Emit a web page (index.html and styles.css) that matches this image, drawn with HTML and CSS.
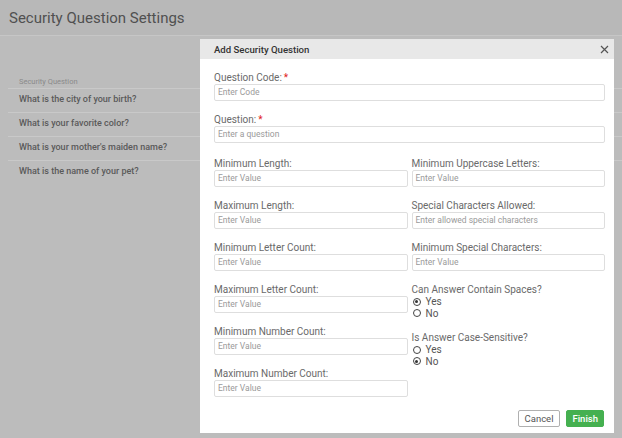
FILE: index.html
```html
<!DOCTYPE html>
<html>
<head>
<meta charset="utf-8">
<link rel="stylesheet" href="styles.css">
</head>
<body>
<div class="page">
  <header class="page-head"><h1 class="page-title">Security Question Settings</h1></header>
  <div class="page-body">
    <div class="q-table">
      <div class="q-th">Security Question</div>
      <div class="q-row">What is the city of your birth?</div>
      <div class="q-row">What is your favorite color?</div>
      <div class="q-row">What is your mother's maiden name?</div>
      <div class="q-row last">What is the name of your pet?</div>
    </div>
  </div>
</div>

<div class="modal">
  <div class="modal-head">
    <span class="modal-title">Add Security Question</span>
    <span class="modal-close">
      <svg width="9" height="9" viewBox="0 0 9 9"><path d="M1 1L8 8M8 1L1 8" stroke="#555" stroke-width="1.2" fill="none"/></svg>
    </span>
  </div>
  <div class="modal-body">
    <div class="field">
      <label class="lbl">Question Code:<span class="req">*</span></label>
      <div class="inp">Enter Code</div>
    </div>
    <div class="field">
      <label class="lbl">Question:<span class="req">*</span></label>
      <div class="inp">Enter a question</div>
    </div>
    <div class="cols">
      <div class="col">
        <div class="field"><label class="lbl">Minimum Length:</label><div class="inp">Enter Value</div></div>
        <div class="field"><label class="lbl">Maximum Length:</label><div class="inp">Enter Value</div></div>
        <div class="field"><label class="lbl">Minimum Letter Count:</label><div class="inp">Enter Value</div></div>
        <div class="field"><label class="lbl">Maximum Letter Count:</label><div class="inp">Enter Value</div></div>
        <div class="field"><label class="lbl">Minimum Number Count:</label><div class="inp">Enter Value</div></div>
        <div class="field"><label class="lbl">Maximum Number Count:</label><div class="inp">Enter Value</div></div>
      </div>
      <div class="col">
        <div class="field"><label class="lbl">Minimum Uppercase Letters:</label><div class="inp">Enter Value</div></div>
        <div class="field"><label class="lbl">Special Characters Allowed:</label><div class="inp">Enter allowed special characters</div></div>
        <div class="field"><label class="lbl">Minimum Special Characters:</label><div class="inp">Enter Value</div></div>
        <div class="field radio-group">
          <label class="lbl">Can Answer Contain Spaces?</label>
          <div class="radio"><span class="dot on"></span>Yes</div>
          <div class="radio"><span class="dot"></span>No</div>
        </div>
        <div class="field radio-group">
          <label class="lbl">Is Answer Case-Sensitive?</label>
          <div class="radio"><span class="dot"></span>Yes</div>
          <div class="radio"><span class="dot on"></span>No</div>
        </div>
      </div>
    </div>
  </div>
  <div class="modal-foot">
    <button class="btn btn-cancel">Cancel</button>
    <button class="btn btn-finish">Finish</button>
  </div>
</div>
</body>
</html>
```
FILE: styles.css
```css
html, body {
  margin: 0;
  padding: 0;
}
body {
  width: 622px;
  height: 438px;
  overflow: hidden;
  background: #bcbcbc;
  font-family: Roboto, "Liberation Sans", sans-serif;
  position: relative;
}
.page-head {
  height: 35px;
  background: #b8b8b8;
  border-bottom: 1px solid #c6c6c6;
  display: flex;
  align-items: center;
  padding-left: 9px;
}
.page-title {
  margin: 0;
  font-size: 15px;
  font-weight: 400;
  color: #505050;
}
.page-body {
  padding: 40px 0 0 8px;
}
.q-th {
  font-size: 7.5px;
  color: #8a8a8a;
  padding: 0 0 0 11px;
  height: 12px;
  line-height: 12px;
  border-bottom: 1px solid #c9c9c9;
}
.q-row {
  height: 23px;
  line-height: 20px;
  padding-left: 11px;
  font-size: 9px;
  font-weight: 500;
  color: #5a5a5a;
  border-bottom: 1px solid #c9c9c9;
}
.q-row.last {
  border-bottom: none;
}

.modal {
  position: absolute;
  left: 200px;
  top: 39px;
  width: 414px;
  height: 394px;
  background: #fff;
  display: flex;
  flex-direction: column;
}
.modal-head {
  height: 20px;
  background: #e8e8e8;
  display: flex;
  align-items: center;
  justify-content: space-between;
  padding: 0 4px 0 14px;
}
.modal-title {
  font-size: 9.6px;
  font-weight: 500;
  color: #333;
}
.modal-close {
  display: flex;
  width: 12px;
  height: 12px;
  align-items: center;
  justify-content: center;
}
.modal-body {
  flex: 1;
  padding: 13px 9px 0 14px;
  display: flex;
  flex-direction: column;
  gap: 13px;
}
.field {
  display: flex;
  flex-direction: column;
}
.lbl {
  font-size: 10px;
  line-height: 12px;
  color: #6a6a6a;
}
.req {
  color: #e02020;
  margin-left: 2px;
}
.inp {
  height: 15px;
  border: 1px solid #dedede;
  border-radius: 2px;
  font-size: 8.5px;
  line-height: 15px;
  color: #9a9a9a;
  padding-left: 3px;
}
.cols {
  display: grid;
  grid-template-columns: 1fr 1fr;
  column-gap: 4px;
  margin-top: 2px;
}
.col {
  display: flex;
  flex-direction: column;
  gap: 13px;
}
.radio-group {
  gap: 0;
}
.radio {
  display: flex;
  align-items: center;
  height: 11.5px;
  font-size: 10px;
  color: #555;
}
.dot {
  width: 8px;
  height: 8px;
  border: 1px solid #444;
  border-radius: 50%;
  margin-left: 1px;
  margin-right: 5px;
  box-sizing: border-box;
  position: relative;
  flex: none;
}
.dot.on::after {
  content: "";
  position: absolute;
  left: 1.5px;
  top: 1.5px;
  width: 3px;
  height: 3px;
  border-radius: 50%;
  background: #333;
}
.modal-foot {
  display: flex;
  justify-content: flex-end;
  gap: 6px;
  padding: 0 10px 6px 0;
}
.btn {
  height: 17px;
  border-radius: 2px;
  font-family: Roboto, "Liberation Sans", sans-serif;
  font-size: 9.5px;
  padding: 0 6px;
  line-height: 15px;
}
.btn-cancel {
  background: #fff;
  border: 1px solid #b0b0b0;
  color: #555;
}
.btn-finish {
  background: #45b050;
  border: 1px solid #45b050;
  color: #fff;
  font-weight: 500;
  padding: 0 5px;
}
```
